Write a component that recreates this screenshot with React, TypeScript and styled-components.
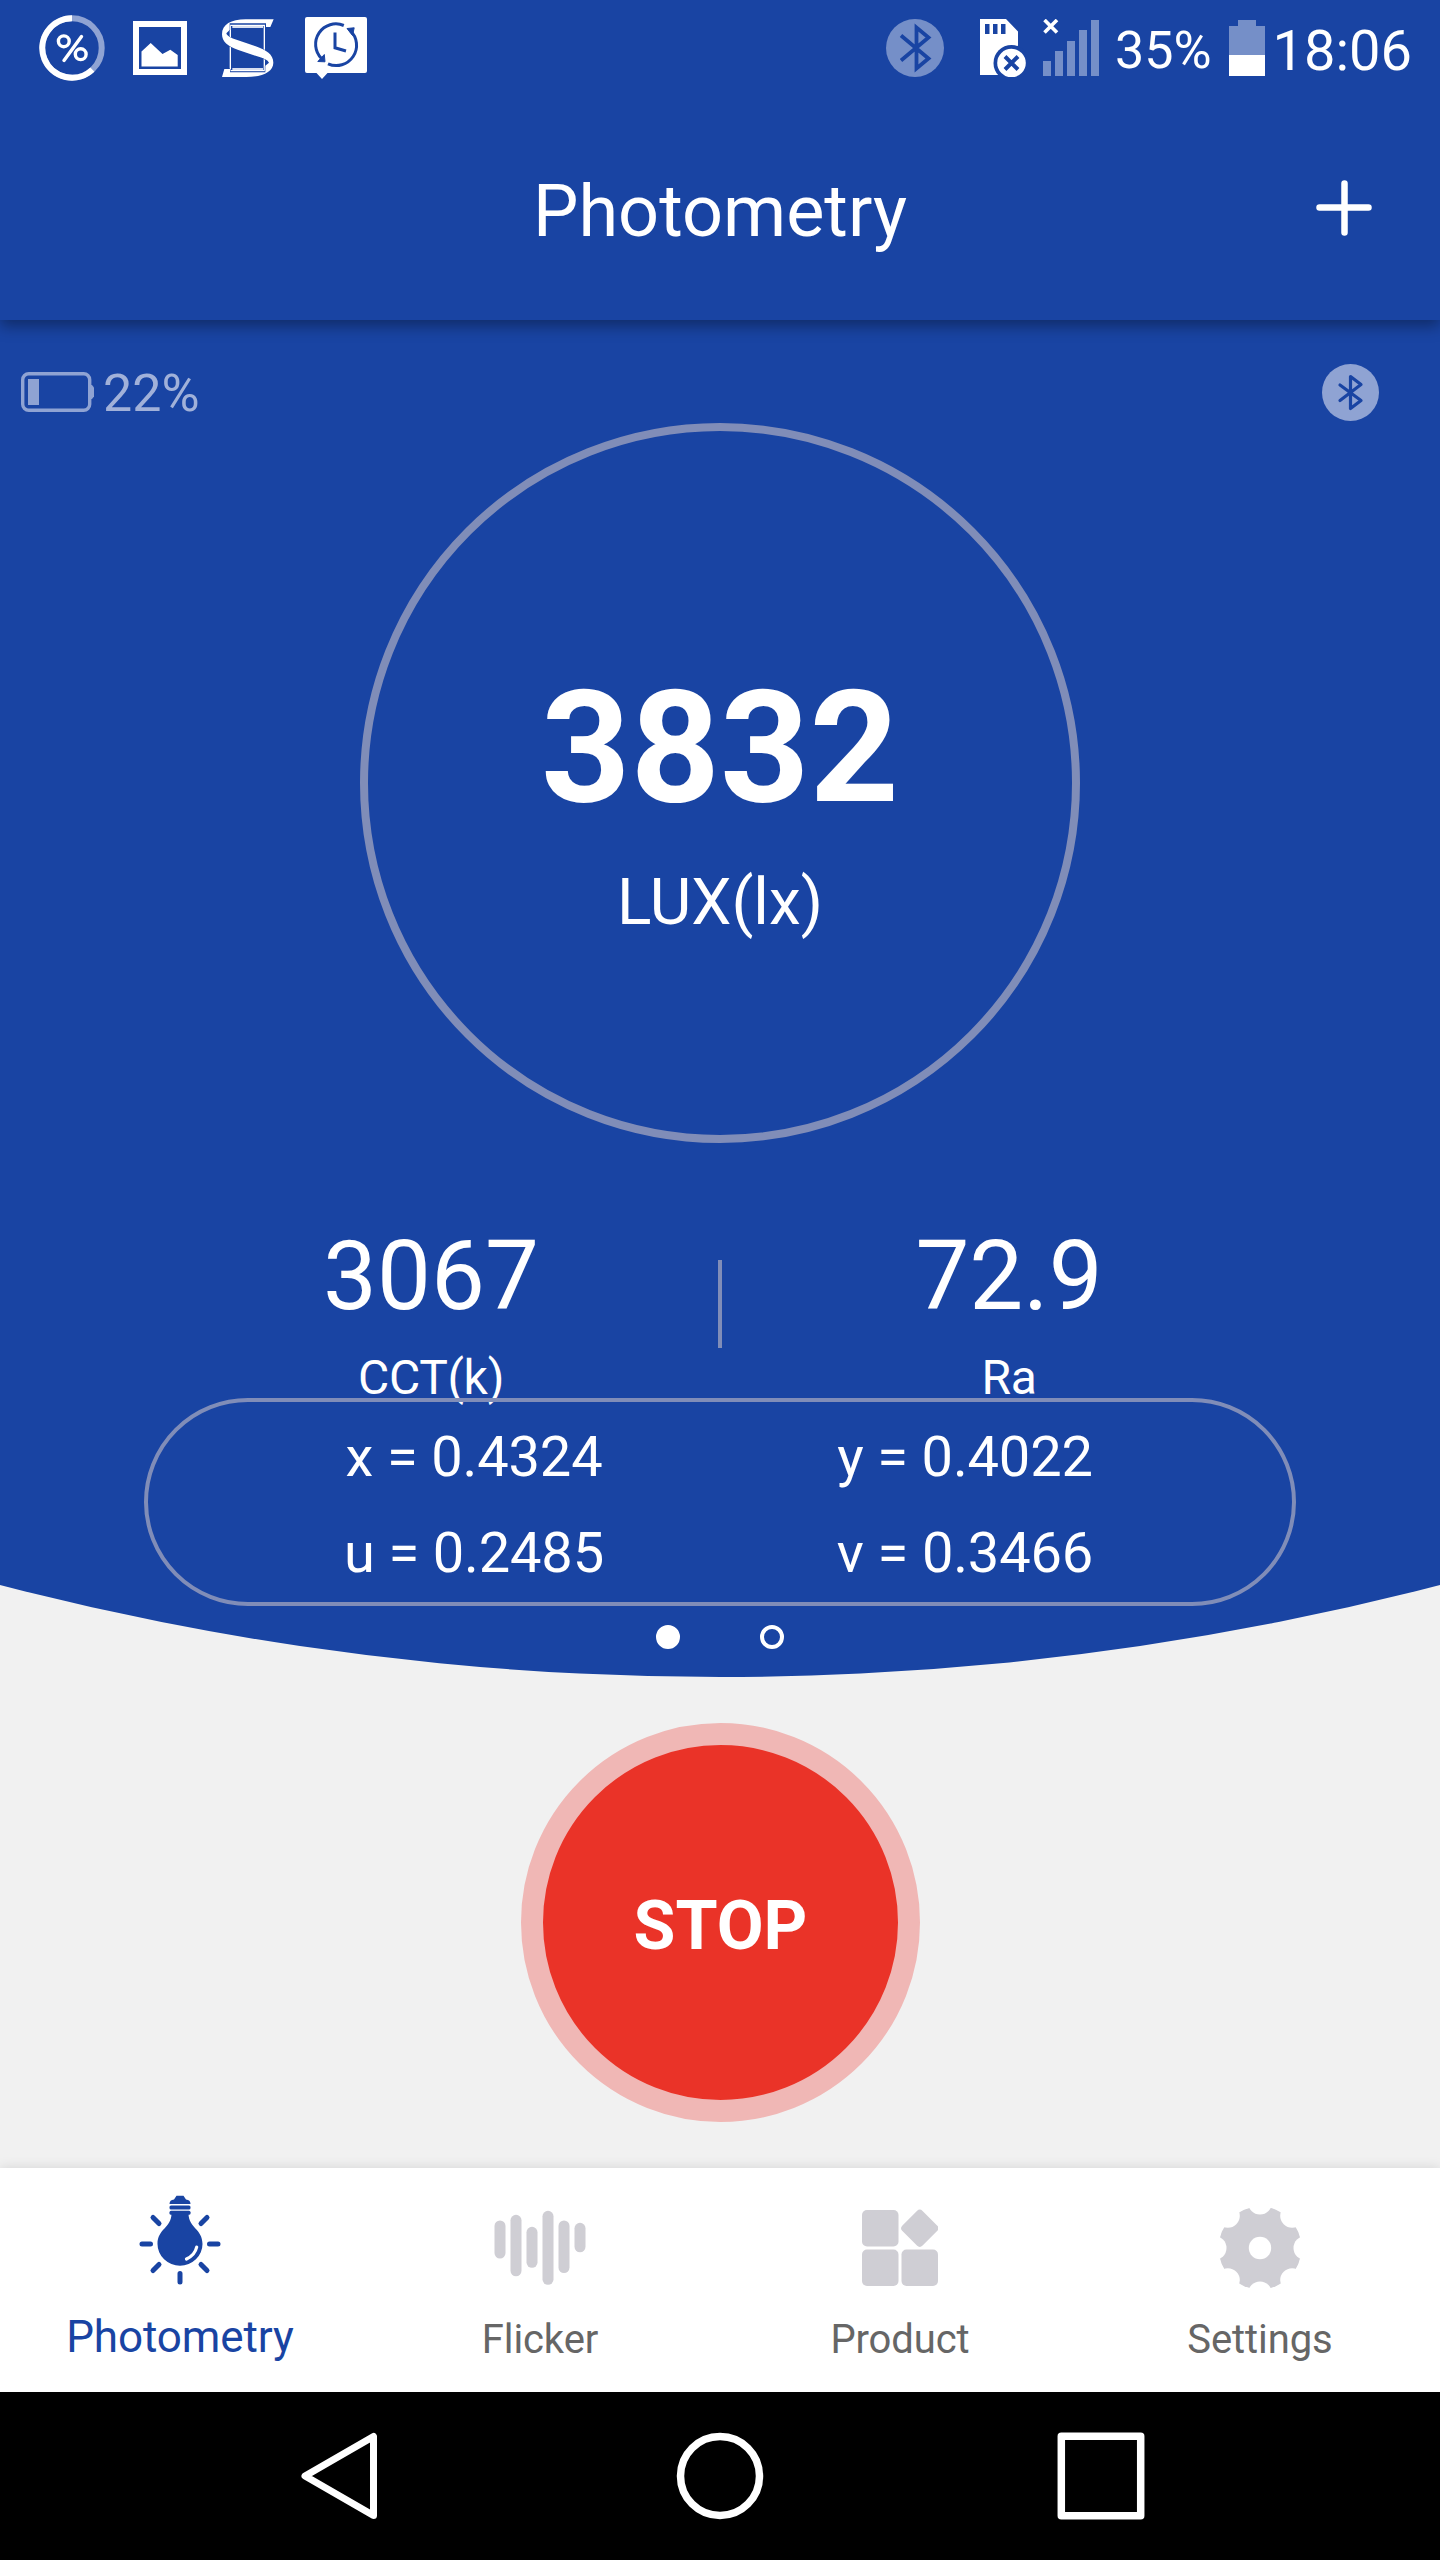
import React from "react";
import styled, { createGlobalStyle } from "styled-components";

const BLUE = "#1944a3";
const MUTED = "#8fa3d3";
const LINE = "#808db8";
const GREY = "#cfced4";

const Global = createGlobalStyle`
  body { margin: 0; background: #f1f1f1; }
  * { box-sizing: border-box; }
  svg { display: block; flex: none; }
`;

const Screen = styled.div`
  width: 1440px;
  height: 2560px;
  display: flex;
  flex-direction: column;
  background: #f1f1f1;
  font-family: Roboto, "Liberation Sans", sans-serif;
  color: #fff;
  overflow: hidden;
`;

const TopArea = styled.div`
  position: relative;
  z-index: 1;
  height: 320px;
  flex: none;
  background: ${BLUE};
  box-shadow: 0 6px 14px rgba(0, 0, 0, 0.36);
`;

const StatusBar = styled.div`
  height: 96px;
  display: flex;
  align-items: center;
  justify-content: space-between;
  padding: 0 28px 0 39px;
`;

const StatusGroup = styled.div`
  display: flex;
  align-items: center;
`;

const Slot = styled.div<{ $before?: number }>`
  margin-left: ${(p) => p.$before ?? 0}px;
`;

const StatusText = styled.span<{ $size: number; $before: number }>`
  font-size: ${(p) => p.$size}px;
  line-height: 64px;
  padding-top: 5px;
  margin-left: ${(p) => p.$before}px;
  white-space: nowrap;
`;

const TitleBar = styled.header`
  height: 224px;
  display: grid;
  grid-template-columns: 160px 1fr 160px;
  align-items: center;
  padding: 0 32px;
`;

const Title = styled.h1`
  grid-column: 2;
  margin: 0;
  padding-top: 8px;
  font-size: 72px;
  line-height: 84px;
  font-weight: 400;
  text-align: center;
`;

const AddButton = styled.button`
  justify-self: end;
  margin-right: 36px;
  padding: 0;
  border: 0;
  background: none;
`;

const Hero = styled.section`
  height: 1357px;
  flex: none;
  display: flex;
  flex-direction: column;
  align-items: center;
  padding-top: 43px;
  background: ${BLUE};
  clip-path: circle(2863px at 720px -1506px);
`;

const DeviceRow = styled.div`
  width: 100%;
  height: 60px;
  display: flex;
  align-items: center;
  justify-content: space-between;
  padding: 0 61px 2px 21px;
`;

const DeviceBattery = styled.div`
  display: flex;
  align-items: center;
  gap: 8px;
  font-size: 52px;
  line-height: 60px;
  color: #a1b1d9;
`;

const BatteryValue = styled.span`
  padding-top: 4px;
`;

const Dial = styled.div`
  width: 720px;
  height: 720px;
  flex: none;
  border: 8px solid ${LINE};
  border-radius: 50%;
  display: flex;
  flex-direction: column;
  align-items: center;
  padding-top: 225px;
`;

const DialValue = styled.div`
  font-size: 156px;
  font-weight: 700;
  line-height: 184px;
`;

const DialUnit = styled.div`
  margin-top: 25px;
  font-size: 64px;
  line-height: 76px;
`;

const Metrics = styled.div`
  width: 1152px;
  height: 178px;
  margin-top: 77px;
  flex: none;
  display: grid;
  grid-template-columns: 1fr 4px 1fr;
`;

const Metric = styled.div`
  display: flex;
  flex-direction: column;
  align-items: center;
`;

const MetricValue = styled.div`
  font-size: 96px;
  line-height: 112px;
`;

const MetricLabel = styled.div`
  margin-top: 18px;
  font-size: 48px;
  line-height: 56px;
  letter-spacing: -0.3px;
`;

const Divider = styled.div`
  height: 88px;
  margin-top: 40px;
  background: ${LINE};
`;

const Coordinates = styled.div`
  position: relative;
  width: 1152px;
  height: 208px;
  flex: none;
  border: 4px solid ${LINE};
  border-radius: 104px;
  padding-top: 7px;
  display: grid;
  grid-template-columns: 490px 492px;
  grid-auto-rows: 96px;
  justify-content: center;
  align-content: start;
`;

const Coordinate = styled.div`
  font-size: 56px;
  line-height: 96px;
  letter-spacing: -0.15px;
  text-align: center;
`;

const Pager = styled.div`
  margin-top: 19px;
  display: flex;
  gap: 80px;
`;

const Dot = styled.span<{ $active?: boolean }>`
  width: 24px;
  height: 24px;
  border: 4px solid #fff;
  border-radius: 50%;
  background: ${(p) => (p.$active ? "#fff" : "transparent")};
`;

const Action = styled.main`
  flex: 1;
  display: flex;
  justify-content: center;
  align-items: flex-start;
  padding: 46px 0 0 1px;
`;

const StopButton = styled.button`
  width: 399px;
  height: 399px;
  padding: 6px 0 0;
  border: 22px solid #f0b7b5;
  border-radius: 50%;
  background: #ea3328;
  color: #fff;
  font: 700 68px/80px Roboto, "Liberation Sans", sans-serif;
`;

const TabBar = styled.nav`
  height: 224px;
  flex: none;
  display: grid;
  grid-template-columns: repeat(4, 1fr);
  background: #fff;
  box-shadow: 0 0 12px rgba(0, 0, 0, 0.12);
`;

const Tab = styled.div<{ $active?: boolean }>`
  display: flex;
  flex-direction: column;
  align-items: center;
  padding-top: 22px;
  color: ${(p) => (p.$active ? BLUE : "#666")};
  font-size: ${(p) => (p.$active ? 44 : 40)}px;
`;

const TabLabel = styled.span<{ $active?: boolean }>`
  margin-top: ${(p) => (p.$active ? 19 : 22)}px;
  line-height: 56px;
  letter-spacing: -0.1px;
`;

const SystemNav = styled.div`
  height: 168px;
  flex: none;
  display: flex;
  align-items: center;
  justify-content: center;
  gap: 293px;
  background: #000;
`;

const PercentIcon = () => (
  <svg width="66" height="66" viewBox="0 0 66 66" fill="none" stroke="#fff">
    <circle cx="33" cy="33" r="29.7" strokeWidth="6" stroke="#8fa3d3" />
    <path d="M33 3.3A29.7 29.7 0 1 0 53.4 54.6" strokeWidth="6" />
    <circle cx="24.8" cy="26.3" r="5.4" strokeWidth="3.4" />
    <circle cx="41.7" cy="39.2" r="5.4" strokeWidth="3.4" />
    <path d="M42.5 21.5L25 45.5" strokeWidth="3.4" strokeLinecap="round" />
  </svg>
);

const PictureIcon = () => (
  <svg width="54" height="54" viewBox="0 0 54 54" fill="#fff">
    <path fillRule="evenodd" d="M0 0H54V54H0ZM6 6V48H48V6Z" />
    <path d="M8.5 45.5V30.5L17.7 22L29.5 33L37.3 28.7L44.7 34V45.5Z" />
  </svg>
);

const RibbonLogo = () => (
  <svg width="52" height="58" viewBox="667 57 156 174" fill="none">
    <path d="M692 76H794V212H692Z" stroke="#fff" strokeWidth="4" />
    <path d="M698 81H790" stroke="#fff" strokeWidth="5" />
    <path d="M698 207H790" stroke="#fff" strokeWidth="5" />
    <path
      fill="#fff"
      stroke={BLUE}
      strokeWidth="3"
      paintOrder="stroke"
      d="M822 58L812 81H799V70H690V90L680 100C682 108 692 113 704 117L768 139C800 150 821 164 821 188C821 216 786 231 740 231H667L674 207H691V217H797V197L808 188C804 180 794 176 782 172L716 150C684 140 667 124 667 103C667 74 694 58 738 58Z"
    />
  </svg>
);

const ClockIcon = () => (
  <svg width="62" height="62" viewBox="0 0 62 62" fill="none">
    <path d="M2 0H60Q62 0 62 2V54Q62 56 60 56H22.5L17 62L11.5 56H2Q0 56 0 54V2Q0 0 2 0Z" fill="#fff" />
    <g stroke={BLUE} strokeWidth="3">
      <path d="M38.8 8.5A20.3 20.3 0 0 0 16.5 41.5" />
      <path d="M45.2 13.5A20.3 20.3 0 0 1 23 46.8" />
      <path d="M30 15.5V30.8L41 34" />
    </g>
    <path d="M42 11.5L49.2 10.8L47.5 18.5ZM12.8 44.5L20 44.8L19.3 37.5Z" fill={BLUE} stroke={BLUE} />
  </svg>
);

const StatusBluetooth = () => (
  <svg width="58" height="58" viewBox="0 0 58 58">
    <circle cx="29" cy="29" r="29" fill="#758fc8" />
    <path
      d="M15 16.5L42.5 39.5L30.5 49.5V8.5L42.5 18.5L15 41.5"
      fill="none"
      stroke={BLUE}
      strokeWidth="3.8"
    />
  </svg>
);

const DeviceBluetooth = () => (
  <svg width="57" height="57" viewBox="0 0 57 57">
    <circle cx="28.5" cy="28.5" r="28.5" fill={MUTED} />
    <path
      d="M18 21L39 36.500L28.500 44.500V12.500L39 20.500L18 36.500"
      fill="none"
      stroke={BLUE}
      strokeWidth="3.200"
      strokeLinecap="round"
      strokeLinejoin="round"
    />
  </svg>
);

const SdCardIcon = () => (
  <svg width="47" height="58" viewBox="0 0 47 58">
    <path
      fill="#fff"
      fillRule="evenodd"
      d="M0 0H26L38 12.500V56H0ZM5 5V15H9.500V5ZM13 5V15H17.500V5ZM21 5V15H25.500V5Z"
    />
    <circle cx="31.500" cy="44" r="18" fill={BLUE} />
    <circle cx="31.500" cy="44" r="14.300" fill="#fff" />
    <path d="M25 37.500L38 50.500M38 37.500L25 50.500" stroke={BLUE} strokeWidth="4" />
  </svg>
);

const signalBars = [15, 25, 35, 46, 56];

const SignalIcon = () => (
  <svg width="56" height="58" viewBox="0 0 56 58">
    {signalBars.map((h, i) => (
      <rect key={h} x={i * 12} y={57 - h} width="8" height={h} fill="#758fc8" />
    ))}
    <path d="M1.500 1L14 13.500M14 1L1.500 13.500" stroke="#fff" strokeWidth="3.600" />
  </svg>
);

const PhoneBatteryIcon = () => (
  <svg width="36" height="56" viewBox="0 0 36 56">
    <path d="M0 6H9V0H27V6H36V35H0Z" fill="#758fc8" />
    <path d="M0 35H36V56H0Z" fill="#fff" />
  </svg>
);

const DeviceBatteryIcon = () => (
  <svg width="74" height="40" viewBox="0 0 74 40">
    <rect x="1.700" y="1.700" width="67" height="36.600" rx="6" fill="none" stroke={MUTED} strokeWidth="3.400" />
    <rect x="7" y="7" width="11" height="26" fill={MUTED} />
    <path d="M69 13H71L73 15.500V24.500L71 27H69Z" fill={MUTED} />
  </svg>
);

const BulbIcon = () => (
  <svg width="90" height="100" viewBox="0 0 90 100">
    <g fill={BLUE}>
      <path d="M41.500 5.800Q45 5.500 48.500 5.800L51 9.500Q55.500 9.800 55.500 14H34.500Q34.500 9.800 39 9.500Z" />
      <rect x="34.500" y="15.600" width="21" height="3.800" rx="1.500" />
      <rect x="34.500" y="20.800" width="21" height="4" rx="1.500" />
      <path d="M36.500 24H53.500C54 38 67.500 39 67.500 54A22.500 21.700 0 0 1 22.500 54C22.500 39 36 38 36.500 24Z" />
    </g>
    <path d="M61.700 57Q60 65 51.500 69" fill="none" stroke="#fff" strokeWidth="3.200" strokeLinecap="round" />
    <path
      d="M7 54H15.500M74.500 54H83M18 27.500L24 33.500M72 27.500L66 33.500M18 80.500L24 74.500M72 80.500L66 74.500M45 83.500V92"
      stroke={BLUE}
      strokeWidth="5"
      strokeLinecap="round"
    />
  </svg>
);

const flickerBars = [
  [30.5, 38],
  [24.8, 61.5],
  [36.8, 41],
  [20.8, 74],
  [30.5, 52.5],
  [32.8, 29.5],
];

const FlickerIcon = () => (
  <svg width="92" height="100" viewBox="0 0 92 100" fill={GREY}>
    {flickerBars.map(([y, h], i) => (
      <rect key={i} x={0.5 + i * 16} y={y} width="11" height={h} rx="5.500" />
    ))}
  </svg>
);

const ProductIcon = () => (
  <svg width="76" height="100" viewBox="0 0 76 100" fill={GREY}>
    <rect x="0" y="20" width="36.500" height="36.500" rx="5" />
    <rect x="0" y="59.500" width="36.500" height="36.500" rx="5" />
    <rect x="39.500" y="59.500" width="36.500" height="36.500" rx="5" />
    <rect x="43.500" y="24" width="28.500" height="28.500" rx="4" transform="rotate(45 57.750 38.250)" />
  </svg>
);

const GearIcon = () => (
  <svg width="84" height="100" viewBox="-42 -58 84 100">
    <mask id="gear-notches">
      <circle r="42" fill="#fff" />
      {[0, 45, 90, 135, 180, 225, 270, 315].map((a) => (
        <circle key={a} cx="45.500" r="12" fill="#000" transform={`rotate(${a})`} />
      ))}
      <circle r="11.200" fill="#000" />
    </mask>
    <circle r="41.500" fill={GREY} mask="url(#gear-notches)" />
  </svg>
);

const BackIcon = () => (
  <svg width="88" height="88" viewBox="0 0 88 88" fill="none" stroke="#fff" strokeWidth="7" strokeLinejoin="round">
    <path d="M78.500 4.500V83.500L10 44Z" />
  </svg>
);

const HomeIcon = () => (
  <svg width="88" height="88" viewBox="0 0 88 88" fill="none" stroke="#fff" strokeWidth="7.500">
    <circle cx="44" cy="44" r="39.500" />
  </svg>
);

const RecentsIcon = () => (
  <svg width="88" height="88" viewBox="0 0 88 88" fill="none" stroke="#fff" strokeWidth="7.500" strokeLinejoin="round">
    <path d="M4.300 4.300H83.700V83.700H4.300Z" />
  </svg>
);

const coordinates = ["x = 0.4324", "y = 0.4022", "u = 0.2485", "v = 0.3466"];

const tabs = [
  { label: "Photometry", Icon: BulbIcon, active: true },
  { label: "Flicker", Icon: FlickerIcon, active: false },
  { label: "Product", Icon: ProductIcon, active: false },
  { label: "Settings", Icon: GearIcon, active: false },
];

export default function App() {
  return (
    <Screen>
      <Global />
      <TopArea>
        <StatusBar>
          <StatusGroup>
            <Slot><PercentIcon /></Slot>
            <Slot $before={28}><PictureIcon /></Slot>
            <Slot $before={35}><RibbonLogo /></Slot>
            <Slot $before={31}><ClockIcon /></Slot>
          </StatusGroup>
          <StatusGroup>
            <Slot><StatusBluetooth /></Slot>
            <Slot $before={36}><SdCardIcon /></Slot>
            <Slot $before={16}><SignalIcon /></Slot>
            <StatusText $size={52} $before={16}>35%</StatusText>
            <Slot $before={17}><PhoneBatteryIcon /></Slot>
            <StatusText $size={56} $before={8}>18:06</StatusText>
          </StatusGroup>
        </StatusBar>
        <TitleBar>
          <Title>Photometry</Title>
          <AddButton aria-label="Add">
            <svg width="56" height="56" viewBox="0 0 56 56" stroke="#fff" strokeWidth="6.500" strokeLinecap="round">
              <path d="M28.500 3.500V52.500M3.500 27.500H52.500" />
            </svg>
          </AddButton>
        </TitleBar>
      </TopArea>
      <Hero>
        <DeviceRow>
          <DeviceBattery>
            <DeviceBatteryIcon />
            <BatteryValue>22%</BatteryValue>
          </DeviceBattery>
          <DeviceBluetooth />
        </DeviceRow>
        <Dial>
          <DialValue>3832</DialValue>
          <DialUnit>LUX(lx)</DialUnit>
        </Dial>
        <Metrics>
          <Metric>
            <MetricValue>3067</MetricValue>
            <MetricLabel>CCT(k)</MetricLabel>
          </Metric>
          <Divider />
          <Metric>
            <MetricValue>72.9</MetricValue>
            <MetricLabel>Ra</MetricLabel>
          </Metric>
        </Metrics>
        <Coordinates>
          {coordinates.map((c) => (
            <Coordinate key={c}>{c}</Coordinate>
          ))}
        </Coordinates>
        <Pager>
          <Dot $active />
          <Dot />
        </Pager>
      </Hero>
      <Action>
        <StopButton>STOP</StopButton>
      </Action>
      <TabBar>
        {tabs.map(({ label, Icon, active }) => (
          <Tab key={label} $active={active}>
            <Icon />
            <TabLabel $active={active}>{label}</TabLabel>
          </Tab>
        ))}
      </TabBar>
      <SystemNav>
        <BackIcon />
        <HomeIcon />
        <RecentsIcon />
      </SystemNav>
    </Screen>
  );
}
